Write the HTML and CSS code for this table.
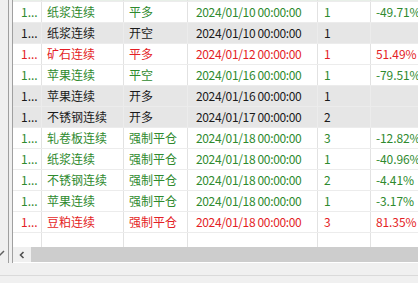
FILE: index.html
```html
<!DOCTYPE html>
<html>
<head>
<meta charset="utf-8">
<link rel="stylesheet" href="styles.css">
</head>
<body>
<div class="app">
  <div class="top">
    <div class="side">
      <svg class="chev" width="10" height="6" viewBox="0 0 10 6"><path d="M-4 1 L0 5 L4 1" fill="none" stroke="#606060" stroke-width="1.5"/></svg>
    </div>
    <div class="main">
      <div class="grid">
        <div class="row partial"><div class="c c1"></div><div class="c c2"></div><div class="c c3"></div><div class="c c4"></div><div class="c c5"></div><div class="c c6"></div></div>
        <div class="row g"><div class="c c1">1...</div><div class="c c2">纸浆连续</div><div class="c c3">平多</div><div class="c c4 n">2024/01/10 00:00:00</div><div class="c c5 n">1</div><div class="c c6 p">-49.71%</div></div>
        <div class="row k"><div class="c c1">1...</div><div class="c c2">纸浆连续</div><div class="c c3">开空</div><div class="c c4 n">2024/01/10 00:00:00</div><div class="c c5 n">1</div><div class="c c6 p"></div></div>
        <div class="row r"><div class="c c1">1...</div><div class="c c2">矿石连续</div><div class="c c3">平多</div><div class="c c4 n">2024/01/12 00:00:00</div><div class="c c5 n">1</div><div class="c c6 p">51.49%</div></div>
        <div class="row g"><div class="c c1">1...</div><div class="c c2">苹果连续</div><div class="c c3">平空</div><div class="c c4 n">2024/01/16 00:00:00</div><div class="c c5 n">1</div><div class="c c6 p">-79.51%</div></div>
        <div class="row k"><div class="c c1">1...</div><div class="c c2">苹果连续</div><div class="c c3">开多</div><div class="c c4 n">2024/01/16 00:00:00</div><div class="c c5 n">1</div><div class="c c6 p"></div></div>
        <div class="row k"><div class="c c1">1...</div><div class="c c2">不锈钢连续</div><div class="c c3">开多</div><div class="c c4 n">2024/01/17 00:00:00</div><div class="c c5 n">2</div><div class="c c6 p"></div></div>
        <div class="row g"><div class="c c1">1...</div><div class="c c2">轧卷板连续</div><div class="c c3">强制平仓</div><div class="c c4 n">2024/01/18 00:00:00</div><div class="c c5 n">3</div><div class="c c6 p">-12.82%</div></div>
        <div class="row g"><div class="c c1">1...</div><div class="c c2">纸浆连续</div><div class="c c3">强制平仓</div><div class="c c4 n">2024/01/18 00:00:00</div><div class="c c5 n">1</div><div class="c c6 p">-40.96%</div></div>
        <div class="row g"><div class="c c1">1...</div><div class="c c2">不锈钢连续</div><div class="c c3">强制平仓</div><div class="c c4 n">2024/01/18 00:00:00</div><div class="c c5 n">2</div><div class="c c6 p">-4.41%</div></div>
        <div class="row g"><div class="c c1">1...</div><div class="c c2">苹果连续</div><div class="c c3">强制平仓</div><div class="c c4 n">2024/01/18 00:00:00</div><div class="c c5 n">1</div><div class="c c6 p">-3.17%</div></div>
        <div class="row r"><div class="c c1">1...</div><div class="c c2">豆粕连续</div><div class="c c3">强制平仓</div><div class="c c4 n">2024/01/18 00:00:00</div><div class="c c5 n">3</div><div class="c c6 p">81.35%</div></div>
        <div class="row filler"><div class="c c1"></div><div class="c c2"></div><div class="c c3"></div><div class="c c4"></div><div class="c c5"></div><div class="c c6"></div></div>
      </div>
      <div class="hscroll">
        <div class="arrow"><svg width="8" height="8" viewBox="0 0 8 8"><path d="M5.5 1 L2.5 4 L5.5 7" fill="none" stroke="#505050" stroke-width="1.6"/></svg></div>
        <div class="thumb"></div>
      </div>
    </div>
  </div>
  <div class="bottom"><div class="bline"></div></div>
</div>
</body>
</html>
```
FILE: styles.css
```css
html, body {
  margin: 0;
  padding: 0;
  width: 418px;
  height: 283px;
  overflow: hidden;
  background: #f0f0f0;
  font-family: "Noto Sans CJK SC", "Microsoft YaHei", sans-serif;
  font-size: 12px;
}
.app {
  display: flex;
  flex-direction: column;
  height: 283px;
}
.top {
  display: flex;
  height: 263px;
}
.side {
  width: 9px;
  height: 265px;
  border-right: 1px solid #a0a0a0;
  border-bottom: 1px solid #a0a0a0;
  box-sizing: border-box;
  background: #f0f0f0;
  display: flex;
  flex-direction: column;
  justify-content: flex-end;
  padding-bottom: 8px;
  flex: none;
}
.chev {
  display: block;
  overflow: visible;
}
.main {
  margin-left: 3px;
  border-left: 1px solid #a0a0a0;
  flex: 1;
  min-width: 0;
  display: flex;
  flex-direction: column;
  background: #fff;
}
.grid {
  flex: 1;
  overflow: hidden;
  display: flex;
  flex-direction: column;
}
.row {
  display: flex;
  height: 21px;
  border-bottom: 1px solid #ececec;
  box-sizing: border-box;
  line-height: 20px;
  white-space: nowrap;
  flex: none;
}
.row.partial {
  height: 2px;
  background: #e8efe8;
}
.row.filler {
  flex: 1;
  border-bottom: none;
  height: auto;
}
.c {
  border-right: 1px solid #e2e2e2;
  box-sizing: border-box;
  overflow: hidden;
  flex: none;
}
.c1 { width: 29px; padding-left: 8px; }
.c2 { width: 82px; padding-left: 5px; }
.c3 { width: 64px; padding-left: 5px; }
.c4 { width: 130px; padding-left: 8px; }
.c5 { width: 53px; padding-left: 6px; }
.c6 { width: 90px; padding-left: 5px; }
.n { letter-spacing: -0.35px; }
.p { letter-spacing: -0.1px; }
.row.g { color: #2e8a2e; background: #fff; }
.row.r { color: #e41e26; background: #fff; }
.row.k { color: #1a1a1a; background: #e6e6e6; }
.row.k .c { border-right-color: #ececec; }
.hscroll {
  height: 15px;
  display: flex;
  background: #f0f0f0;
  flex: none;
  margin-bottom: 1px;
}
.arrow {
  width: 18px;
  display: flex;
  align-items: center;
  justify-content: center;
}
.arrow svg { display: block; }
.thumb {
  flex: 1;
  background: #cdcdcd;
}
.bottom {
  flex: 1;
  background: #f0f0f0;
  padding-top: 12px;
}
.bline {
  height: 1px;
  background: #dadada;
}
```
